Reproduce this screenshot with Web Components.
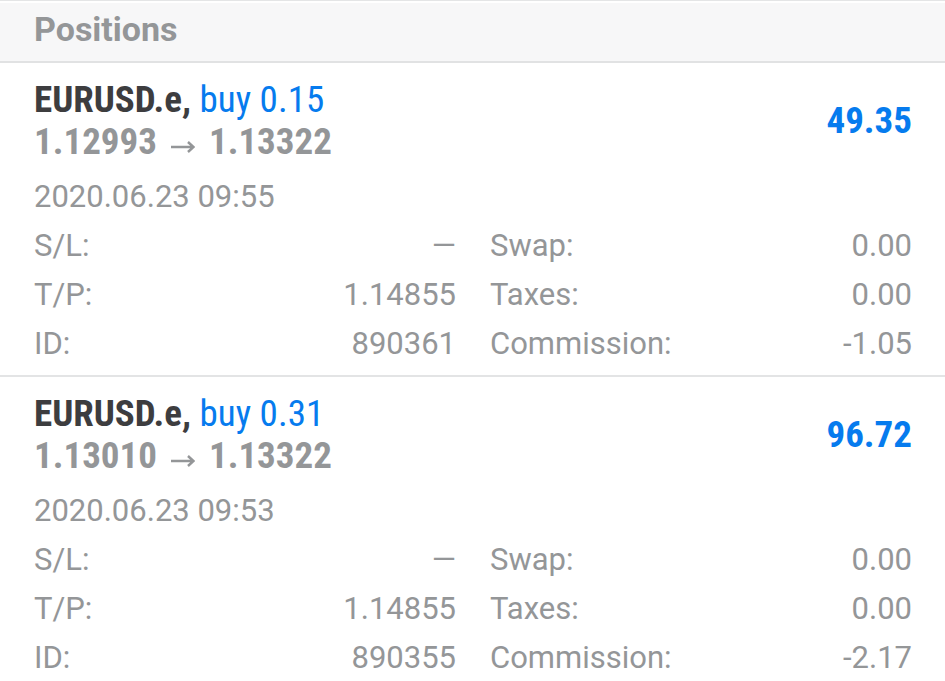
<!DOCTYPE html>
<html lang="en">
<head>
<meta charset="utf-8">
<title>Positions</title>
<style>
body { margin: 0; background: #fff; color: #949698; font-family: Roboto, "Liberation Sans", sans-serif; }
</style>
</head>
<body>
<position-list heading="Positions">
  <position-card symbol="EURUSD.e" volume="buy 0.15" open="1.12993" current="1.13322" profit="49.35" time="2020.06.23 09:55">
    <detail-row slot="left" label="S/L:">—</detail-row>
    <detail-row slot="left" label="T/P:">1.14855</detail-row>
    <detail-row slot="left" label="ID:">890361</detail-row>
    <detail-row slot="right" label="Swap:">0.00</detail-row>
    <detail-row slot="right" label="Taxes:">0.00</detail-row>
    <detail-row slot="right" label="Commission:">-1.05</detail-row>
  </position-card>
  <position-card symbol="EURUSD.e" volume="buy 0.31" open="1.13010" current="1.13322" profit="96.72" time="2020.06.23 09:53">
    <detail-row slot="left" label="S/L:">—</detail-row>
    <detail-row slot="left" label="T/P:">1.14855</detail-row>
    <detail-row slot="left" label="ID:">890355</detail-row>
    <detail-row slot="right" label="Swap:">0.00</detail-row>
    <detail-row slot="right" label="Taxes:">0.00</detail-row>
    <detail-row slot="right" label="Commission:">-2.17</detail-row>
  </position-card>
</position-list>

<template id="list-template">
  <style>
    :host { display: block; }
    header { border-top: 1px solid #e4e5e6; border-bottom: 2px solid #e1e2e3; padding: 2px 0 0; }
    h1 { margin: 0; padding: 6px 34px 12px; background: #f7f7f8; font-size: 34px; line-height: 40px; font-weight: 700; }
  </style>
  <header><h1></h1></header>
  <main><slot></slot></main>
</template>

<template id="card-template">
  <style>
    :host { display: block; padding: 16px 33px 7px 34px; border-bottom: 2px solid #e3e4e5; }
    .summary { display: flex; align-items: center; justify-content: space-between; font: 700 37px/42px "Roboto Condensed", Roboto, sans-serif; }
    h2, p { margin: 0; font: inherit; }
    .symbol { color: #3d3d3f; }
    .volume { color: #067bee; font-weight: 400; }
    .prices { display: flex; align-items: center; gap: 14px; }
    svg { width: 24px; height: 42px; fill: none; stroke: currentColor; stroke-width: 2.5; }
    .profit { color: #067bee; }
    time { display: block; margin-top: 9px; font-size: 31px; line-height: 49px; }
    .details { display: grid; grid-template-columns: 1fr 1fr; gap: 34px; }
  </style>
  <div class="summary">
    <div>
      <h2><span class="symbol"></span> <span class="volume"></span></h2>
      <p class="prices"><span class="open"></span><svg viewBox="0 0 24 42" role="img" aria-label="to"><path d="M0 26H22M17 21L22.5 26L17 31"/></svg><span class="current"></span></p>
    </div>
    <p class="profit"></p>
  </div>
  <time></time>
  <div class="details"><div><slot name="left"></slot></div><div><slot name="right"></slot></div></div>
</template>

<template id="row-template">
  <style>
    :host { display: flex; justify-content: space-between; font-size: 31px; line-height: 49px; }
  </style>
  <span class="label"></span><span><slot></slot></span>
</template>

<script>
class TemplateElement extends HTMLElement {
  mount(id) {
    this.attachShadow({ mode: "open" }).append(document.getElementById(id).content.cloneNode(true));
  }
  fill(selector, text) {
    this.shadowRoot.querySelector(selector).textContent = text;
  }
}
customElements.define("detail-row", class extends TemplateElement {
  connectedCallback() {
    if (this.shadowRoot) return;
    this.mount("row-template");
    this.fill(".label", this.getAttribute("label"));
  }
});
customElements.define("position-card", class extends TemplateElement {
  connectedCallback() {
    if (this.shadowRoot) return;
    this.mount("card-template");
    this.fill(".symbol", this.getAttribute("symbol") + ",");
    for (const name of ["volume", "open", "current", "profit"]) this.fill("." + name, this.getAttribute(name));
    this.fill("time", this.getAttribute("time"));
  }
});
customElements.define("position-list", class extends TemplateElement {
  connectedCallback() {
    if (this.shadowRoot) return;
    this.mount("list-template");
    this.fill("h1", this.getAttribute("heading"));
  }
});
</script>
</body>
</html>
